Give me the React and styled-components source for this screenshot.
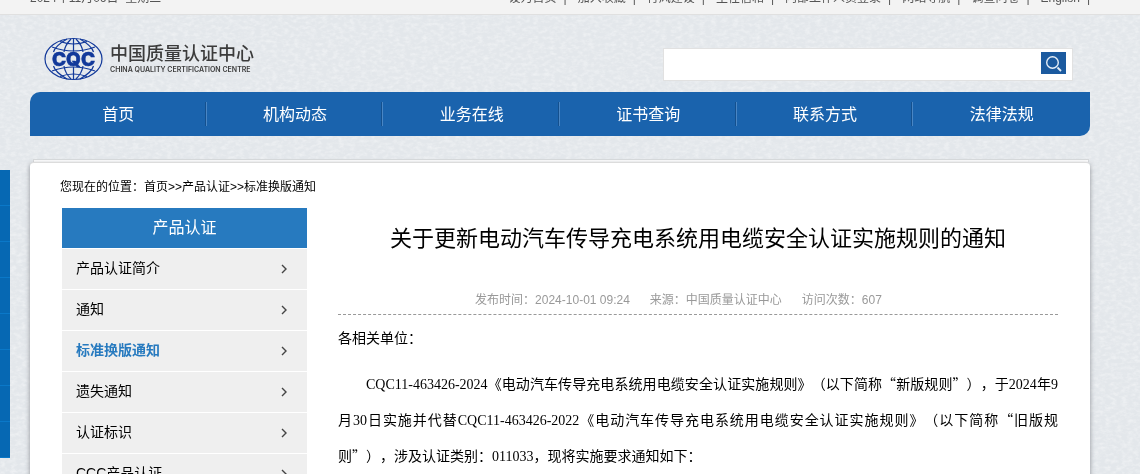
import React from "react";
import styled, { createGlobalStyle } from "styled-components";

const GlobalStyle = createGlobalStyle`
    html {
        overflow: hidden;
    }
    body {
        margin: 0;
        background: #e3e7eb;
        color: #000;
        font-family: "Liberation Sans", "Noto Sans CJK SC", sans-serif;
        font-size: 12px;
        overflow: hidden;
        text-spacing-trim: space-all;
        text-autospace: no-autospace;
    }
    a {
        color: inherit;
        text-decoration: none;
    }
`;

const Texture = styled.svg`
    position: fixed;
    inset: 0;
    width: 100%;
    height: 100%;
    z-index: -1;
`;

const Wrap = styled.div`
    margin: 0 50px 0 30px;
`;

const TopBar = styled.div`
    margin-top: -20px;
    background: #f3f3f3;
    border-bottom: 1px solid #e0e0e0;
    color: #555;
`;

const TopInner = styled(Wrap)`
    display: flex;
    justify-content: space-between;
    height: 34px;
    line-height: 36px;
`;

const TopLinks = styled.nav`
    display: flex;

    a::after {
        content: "|";
        margin: 0 11px 0 7px;
    }
    a:last-child::after {
        margin-right: 0;
    }
`;

const Header = styled(Wrap)`
    display: flex;
    justify-content: space-between;
    align-items: center;
    height: 77px;
`;

const Logo = styled.a`
    display: flex;
    align-items: center;
    gap: 7px;
    margin: 10px 0 0 14px;
    color: #3b3b3b;
`;

const LogoText = styled.span`
    display: flex;
    flex-direction: column;
    font-size: 18px;
    font-weight: 500;
    line-height: 22px;
    white-space: nowrap;

    small {
        font-family: Inter, sans-serif;
        font-size: 7px;
        font-weight: 600;
        line-height: 10px;
    }
`;

const Search = styled.form`
    display: flex;
    align-items: center;
    box-sizing: border-box;
    width: 410px;
    height: 33px;
    margin: 22px 17px 0 0;
    padding: 0 6px 3px 10px;
    background: #fff;
    border: 1px solid #e1e1e1;

    input {
        flex: 1;
        min-width: 0;
        border: 0;
        outline: 0;
        background: none;
    }
    button {
        display: flex;
        justify-content: center;
        align-items: center;
        width: 25px;
        height: 22px;
        padding: 0;
        border: 0;
        background: #1b5a9f;
    }
`;

const MainNav = styled.nav`
    display: flex;
    height: 44px;
    border-radius: 10px 0 10px 0;
    background: #1a63ad;
    color: #fff;
    font-size: 16px;
`;

const NavItem = styled.a`
    flex: 1;
    display: flex;
    align-items: center;
    line-height: 24px;

    span {
        flex: 1;
        padding-top: 2px;
        text-align: center;
    }
    &:not(:last-child)::after {
        content: "";
        width: 1px;
        height: 24px;
        margin-left: -2px;
        background: #4a86c4;
        border-left: 1px solid #14508e;
    }
`;

const Sheet = styled.div`
    height: 2px;
    margin: 23px 1px 0 3px;
    background: #fff;
    border: 1px solid #d8dadc;
    border-bottom: 0;
`;

const Card = styled.main`
    box-sizing: border-box;
    min-height: 400px;
    padding: 0 32px;
    background: #fff;
    border-top: 1px solid #dcdcdc;
    border-radius: 4px 4px 0 0;
    box-shadow: 0 2px 5px #8b8f94;
`;

const Crumbs = styled.div`
    margin-left: -2px;
    padding: 15px 0 12px;
    line-height: 18px;
`;

const Columns = styled.div`
    display: flex;
    gap: 31px;
`;

const Side = styled.aside`
    width: 245px;
    flex: none;
    font-size: 14px;

    h2 {
        margin: 0 0 1px;
        background: #277abf;
        color: #fff;
        font-size: 16px;
        font-weight: 400;
        line-height: 40px;
        text-align: center;
    }
`;

const SideItem = styled.a`
    display: flex;
    justify-content: space-between;
    align-items: center;
    height: 40px;
    margin-bottom: 1px;
    padding: 0 20px 0 14px;
    background: #efefef;
    color: ${(props) => (props.$active ? "#277abf" : "#000")};
    font-weight: ${(props) => (props.$active ? 700 : 400)};
    line-height: 38px;

    span {
        padding-bottom: 2px;
    }
`;

const Article = styled.article`
    flex: 1;
    min-width: 0;

    h1 {
        margin: 13px 0 0;
        font-size: 22px;
        font-weight: 400;
        line-height: 36px;
        text-align: center;
    }
`;

const Meta = styled.div`
    display: flex;
    justify-content: center;
    gap: 20px;
    margin-top: 34px;
    padding: 0 39px 5px 0;
    border-bottom: 1px dashed #999;
    color: #999;
    line-height: 18px;
`;

const Para = styled.p`
    margin: ${(props) => (props.$indent ? "10px 0 0" : "4px 0 0")};
    text-indent: ${(props) => (props.$indent ? "28px" : "0")};
    font-family: "Noto Sans CJK SC", sans-serif;
    font-size: 14px;
    line-height: 36px;
    text-align: justify;
`;

const Num = styled.span`
    font-family: "Liberation Serif", serif;
    line-height: 1;
`;

const FloatBar = styled.aside`
    position: fixed;
    top: 170px;
    left: 0;
    width: 10px;

    div {
        height: 35px;
        background: #0668b3;
        border-bottom: 1px solid #0a78c8;
    }
`;

const topLinks = ["设为首页", "加入收藏", "行风建设", "主任信箱", "内部工作人员登录", "网站导航", "调查问卷", "English"];
const navItems = ["首页", "机构动态", "业务在线", "证书查询", "联系方式", "法律法规"];
const sideItems = ["产品认证简介", "通知", "标准换版通知", "遗失通知", "认证标识", "CCC产品认证"];

const Globe = () => (
    <svg width="59" height="44" viewBox="0 0 59 44" fill="none" stroke="#12399a" strokeWidth="1.2">
        <ellipse cx="29.5" cy="22" rx="28.5" ry="20.5" />
        <path d="M29.5 1.5v13M29.5 30v12.5" />
        <path d="M23 2Q11 9 9.500 15M36 2Q48 9 49.500 15M23 42Q11 35 9.500 29M36 42Q48 35 49.500 29" />
        <path d="M27 2Q21 8 20 15M32 2Q38 8 39 15M27 42Q21 36 20 29M32 42Q38 36 39 29" />
        <path d="M16 4.500q13.500 5 27 0M8 10q21.500 8 43 0M16 39.500q13.500-5 27 0M8 34q21.500-8 43 0" />
        <text x="29.500" y="29" textAnchor="middle" fill="#12399a" stroke="#12399a" strokeWidth="0.6" fontFamily="Inter" fontSize="19" fontWeight="800">CQC</text>
    </svg>
);

const App = () => {
    return (
        <>
            <GlobalStyle />
            <Texture aria-hidden="true">
                <filter id="paper">
                    <feTurbulence type="fractalNoise" baseFrequency="0.18 0.3" numOctaves="3" seed="4" />
                    <feColorMatrix values="0 0 0 0 1  0 0 0 0 1  0 0 0 0 1  0.8 0 0 0 -0.3" />
                </filter>
                <rect width="100%" height="100%" filter="url(#paper)" />
            </Texture>

            <TopBar>
                <TopInner>
                    <span>2024年11月06日 &nbsp;星期三</span>
                    <TopLinks>
                        {topLinks.map((t) => <a href="#" key={t}>{t}</a>)}
                    </TopLinks>
                </TopInner>
            </TopBar>

            <Header>
                <Logo href="#">
                    <Globe />
                    <LogoText>
                        中国质量认证中心
                        <small>CHINA QUALITY CERTIFICATION CENTRE</small>
                    </LogoText>
                </Logo>
                <Search>
                    <input type="text" aria-label="搜索" />
                    <button type="button" aria-label="搜索">
                        <svg width="17" height="17" viewBox="0 0 17 17" fill="none" stroke="#e6eef7" strokeWidth="1.4">
                            <circle cx="7.500" cy="7.500" r="5.800" />
                            <path d="M12.500 12.500l3.500 3.500" strokeWidth="1.800" />
                        </svg>
                    </button>
                </Search>
            </Header>

            <Wrap>
                <MainNav>
                    {navItems.map((t) => (
                        <NavItem href="#" key={t}><span>{t}</span></NavItem>
                    ))}
                </MainNav>

                <Sheet />
                <Card>
                    <Crumbs>
                        您现在的位置：<a href="#">首页</a>&gt;&gt;<a href="#">产品认证</a>&gt;&gt;<a href="#">标准换版通知</a>
                    </Crumbs>
                    <Columns>
                        <Side>
                            <h2>产品认证</h2>
                            {sideItems.map((t) => (
                                <SideItem href="#" key={t} $active={t === "标准换版通知"}>
                                    <span>{t}</span>
                                    <svg width="6" height="10" viewBox="0 0 6 10" fill="none" stroke="#444" strokeWidth="1.4">
                                        <path d="M1 1l4 4-4 4" />
                                    </svg>
                                </SideItem>
                            ))}
                        </Side>
                        <Article>
                            <h1>关于更新电动汽车传导充电系统用电缆安全认证实施规则的通知</h1>
                            <Meta>
                                <span>发布时间：2024-10-01 09:24</span>
                                <span>来源：中国质量认证中心</span>
                                <span>访问次数：607</span>
                            </Meta>
                            <Para>各相关单位：</Para>
                            <Para $indent>
                                <Num>CQC11-463426-2024</Num>《电动汽车传导充电系统用电缆安全认证实施规则》（以下简称“新版规则”），于<Num>2024</Num>年<Num>9</Num>月<Num>30</Num>日实施并代替<Num>CQC11-463426-2022</Num>《电动汽车传导充电系统用电缆安全认证实施规则》（以下简称“旧版规则”），涉及认证类别：<Num>011033</Num>，现将实施要求通知如下：
                            </Para>
                        </Article>
                    </Columns>
                </Card>
            </Wrap>

            <FloatBar>
                {[1, 2, 3, 4, 5, 6, 7, 8].map((n) => <div key={n} />)}
            </FloatBar>
        </>
    );
};

export default App;
